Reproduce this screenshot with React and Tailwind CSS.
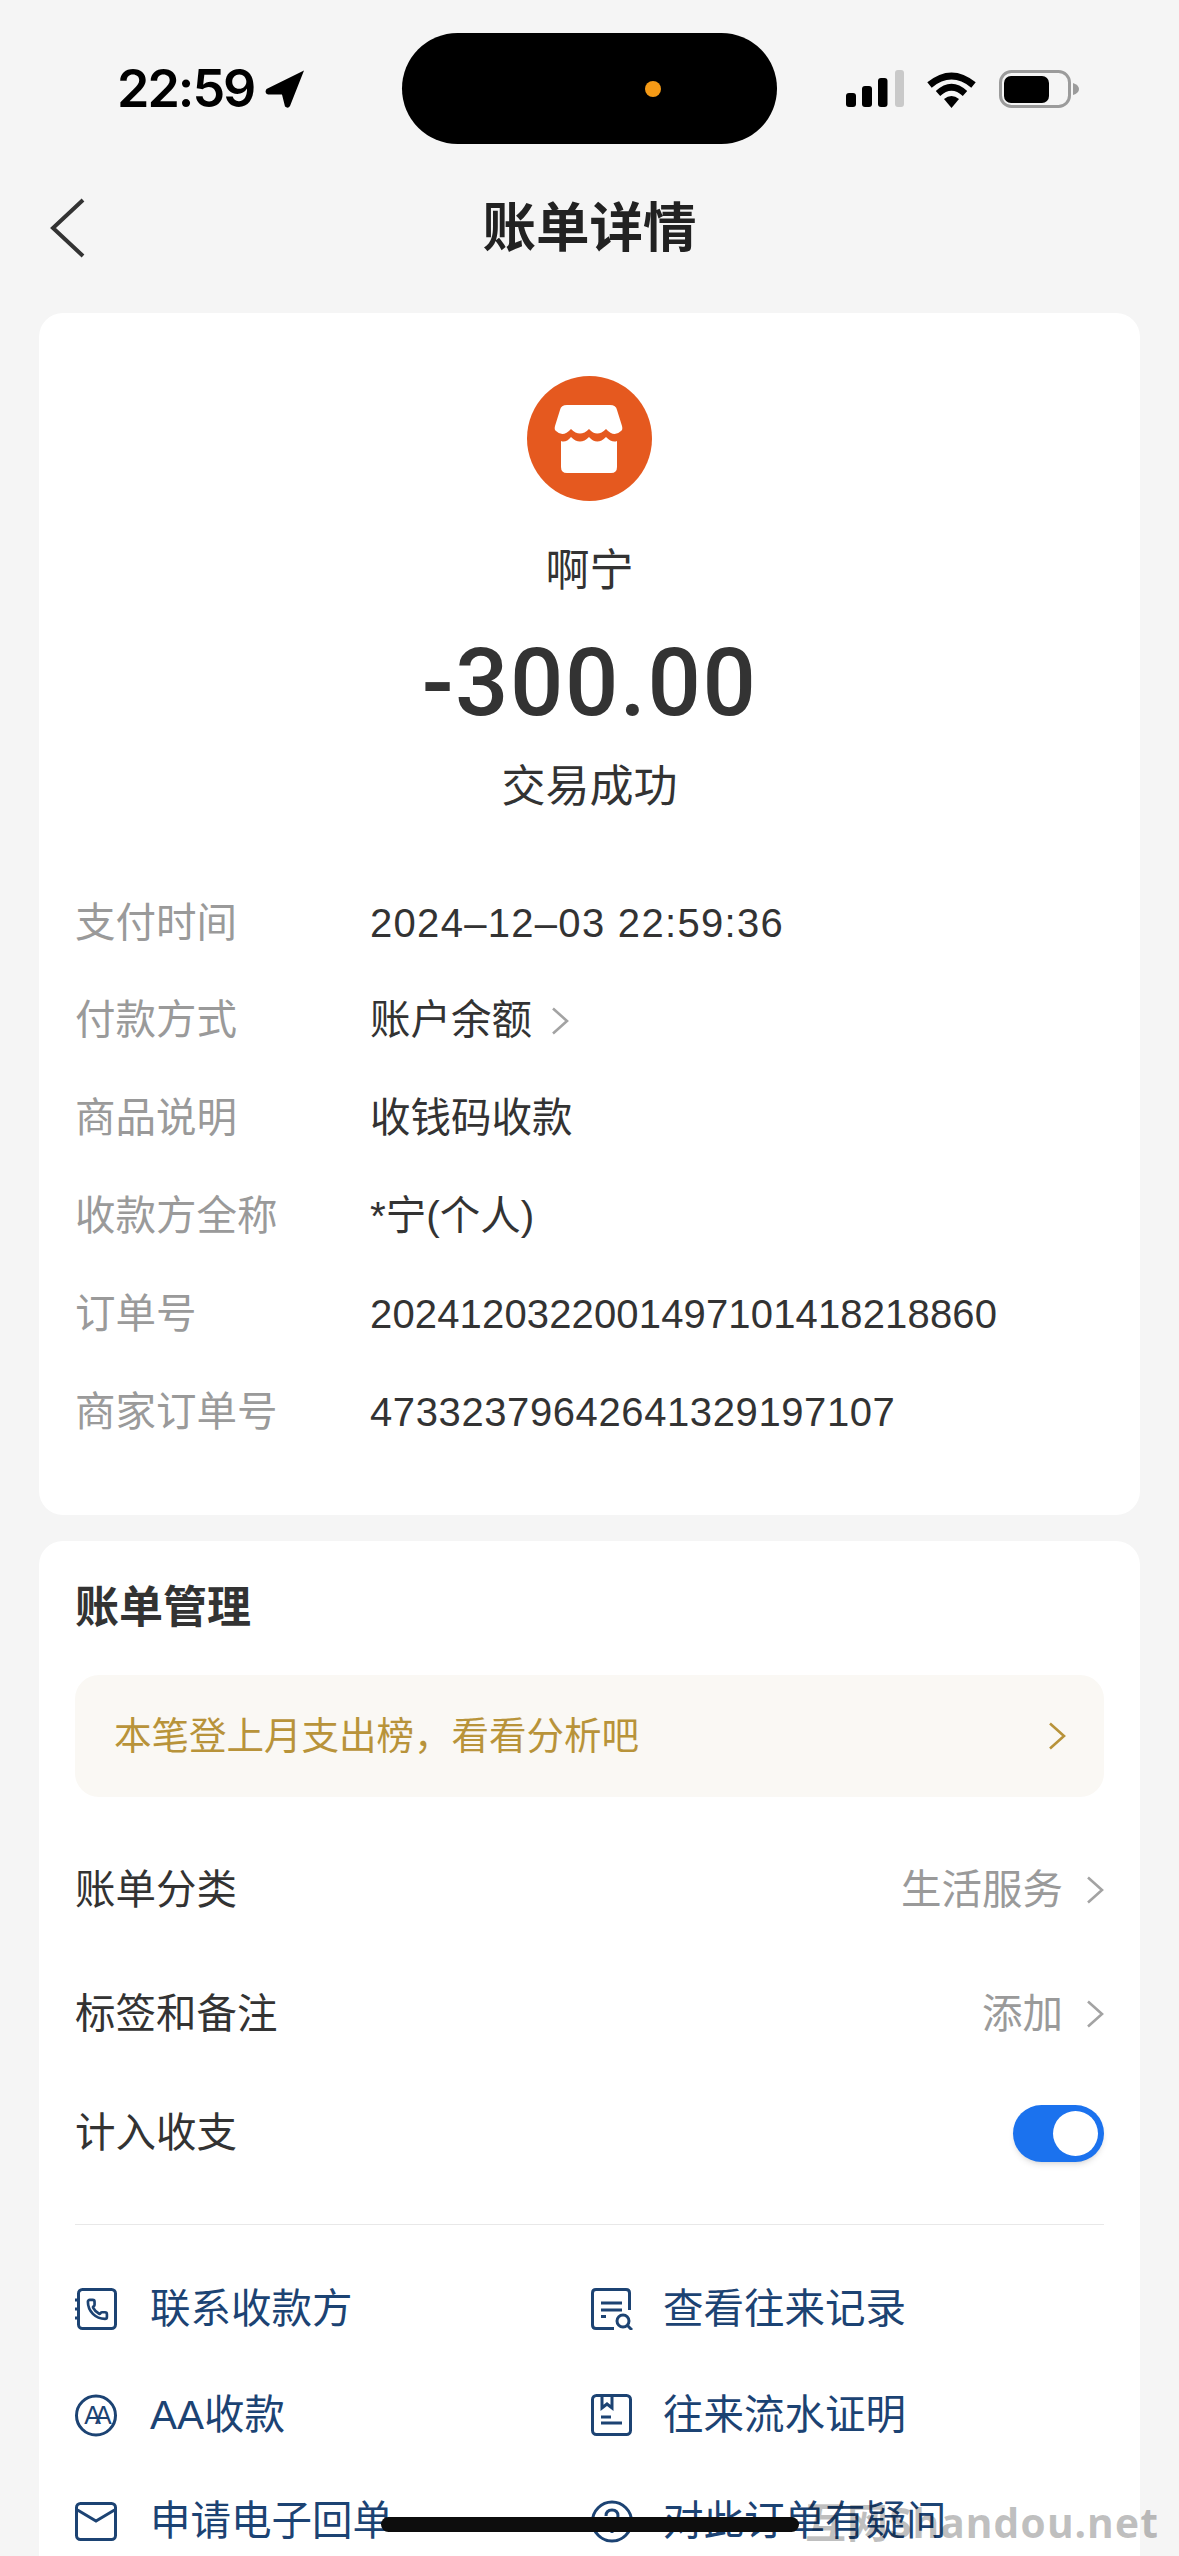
import React from 'react';

const NAVY = '#1c4373';

const Chevron = ({ className = '', color = '#a3a3a3' }) => (
  <svg width="18" height="28" viewBox="0 0 18 28" fill="none" className={className}>
    <path d="M2 1.5 L16 14 L2 26.5" stroke={color} strokeWidth="2.6" />
  </svg>
);

const StoreIcon = () => (
  <svg width="125" height="125" viewBox="0 0 125 125">
    <circle cx="62.5" cy="62.5" r="62.5" fill="#e5591f" />
    <path fill="#fff" d="M40 29 H83 Q89 29 90 34 L95 50 Q96 54 94 55 Q87 62 79 53 Q70 62 62 53 Q53 62 44 53 Q36 62 29 55 Q27 54 28 50 L33 34 Q34 29 40 29Z" />
    <path fill="#fff" d="M34 65 Q39 67 44 61 Q53 70 62 61 Q70 70 79 61 Q85 67 90 65 V91 Q90 97 84 97 H40 Q34 97 34 91Z" />
  </svg>
);

// status bar glyphs
const LocationArrow = () => (
  <svg width="40" height="38" viewBox="0 0 40 38" className="ml-[11px]">
    <path fill="#000" d="M39 0.5 L1.5 19 Q-1 23 3 24.5 L17 24.5 L20 36.5 Q23 39 25 36 Z" />
  </svg>
);

const SignalIcon = () => (
  <svg width="58" height="37" viewBox="0 0 58 37">
    <rect x="0" y="23" width="10" height="14" rx="3" fill="#000" />
    <rect x="16" y="16" width="10" height="21" rx="3" fill="#000" />
    <rect x="32" y="8" width="9.5" height="29" rx="3" fill="#000" />
    <rect x="49" y="0" width="9" height="37" rx="3" fill="#c9c9c9" />
  </svg>
);

const WifiIcon = () => (
  <svg width="51" height="38" viewBox="0 0 51 38" fill="none">
    <path d="M3.5 15 Q25.5 -3 47.5 15" stroke="#000" strokeWidth="7" />
    <path d="M12 23.5 Q25.5 11 39 23.5" stroke="#000" strokeWidth="6.5" />
    <path d="M18 29 Q25.5 23 33 29 L25.5 38 Z" fill="#000" />
  </svg>
);

const BatteryIcon = () => (
  <svg width="80" height="38" viewBox="0 0 80 38" fill="none">
    <rect x="1.5" y="1.5" width="69" height="35" rx="11" stroke="#9b9b9b" strokeWidth="3" />
    <rect x="5" y="6" width="45" height="27" rx="7" fill="#000" />
    <path d="M74 13 Q80 15 80 19 Q80 23 74 25 Z" fill="#9b9b9b" />
  </svg>
);

// bottom action icons, all 42 wide
const ContactIcon = () => (
  <svg width="42" height="42" viewBox="0 0 42 42" fill="none" stroke={NAVY} strokeWidth="3">
    <rect x="3.5" y="1.5" width="37" height="39" rx="4" />
    <path d="M0 12 H5 M0 21 H5 M0 30 H5" />
    <g transform="translate(11 10) scale(0.95)" strokeWidth="2.8">
      <path d="M13.832 16.568a1 1 0 0 0 1.213-.303l.355-.465A2 2 0 0 1 17 15h3a2 2 0 0 1 2 2v3a2 2 0 0 1-2 2A18 18 0 0 1 2 4a2 2 0 0 1 2-2h3a2 2 0 0 1 2 2v3a2 2 0 0 1-.8 1.6l-.468.351a1 1 0 0 0-.292 1.233 14 14 0 0 0 6.392 6.384" />
    </g>
  </svg>
);

const RecordIcon = () => (
  <svg width="42" height="42" viewBox="0 0 42 42" fill="none" stroke={NAVY} strokeWidth="3">
    <path d="M23 40.5 H5 Q1.5 40.5 1.5 37 V5 Q1.5 1.5 5 1.5 H35 Q38.5 1.5 38.5 5 V22" />
    <path d="M10 15 H31 M10 22 H31 M10 28.5 H15" />
    <circle cx="32" cy="33" r="6" />
    <path d="M36.5 37.5 L41 42" />
  </svg>
);

const AAIcon = () => (
  <svg width="42" height="43" viewBox="0 0 42 43" fill="none">
    <circle cx="21" cy="21.5" r="19.5" stroke={NAVY} strokeWidth="3" />
    <text x="20" y="30" textAnchor="middle" fontSize="25" fontFamily="'Liberation Sans'" letterSpacing="-6" fill={NAVY}>AA</text>
  </svg>
);

const LedgerIcon = () => (
  <svg width="42" height="42" viewBox="0 0 42 42" fill="none" stroke={NAVY} strokeWidth="3">
    <rect x="1.5" y="1.5" width="38" height="39" rx="4" />
    <path d="M11 2 V14 L16 10 L21 14 V2" />
    <path d="M10 23 H20 M10 29 H31" />
  </svg>
);

const MailIcon = () => (
  <svg width="42" height="39" viewBox="0 0 42 39" fill="none" stroke={NAVY} strokeWidth="3">
    <rect x="1.5" y="1.5" width="39" height="36" rx="4" />
    <path d="M2.5 8 L21 19 L39.5 8" />
  </svg>
);

const QuestionIcon = () => (
  <svg width="42" height="43" viewBox="0 0 42 43" fill="none" stroke={NAVY} strokeWidth="3">
    <circle cx="21" cy="21.5" r="19.5" />
    <path d="M15 16 Q15 10 21 10 Q27 10 27 16 Q27 20 21 22 V26" />
    <path d="M21 30 V33" />
  </svg>
);

const infoRows = [
  { label: '支付时间', value: '2024–12–03 22:59:36', cls: 'text-[40px] tracking-[1.3px]' },
  { label: '付款方式', value: '账户余额', link: true },
  { label: '商品说明', value: '收钱码收款' },
  { label: '收款方全称', value: '*宁(个人)' },
  { label: '订单号', value: '2024120322001497101418218860', cls: 'text-[40px] tracking-[0.15px]' },
  { label: '商家订单号', value: '47332379642641329197107', cls: 'text-[40px] tracking-[0.6px]' },
];

const actions = [
  [<ContactIcon key="i" />, '联系收款方', <RecordIcon key="j" />, '查看往来记录'],
  [<AAIcon key="i" />, 'AA收款', <LedgerIcon key="j" />, '往来流水证明'],
  [<MailIcon key="i" />, '申请电子回单', <QuestionIcon key="j" />, '对此订单有疑问'],
];

export default function App() {
  return (
    <div className="relative w-[1179px] h-[2556px] overflow-hidden bg-[#f5f5f5] text-[#333] font-['Liberation_Sans','Noto_Sans_CJK_SC',sans-serif]">
      {/* Status bar */}
      <div className="flex items-center pt-[33px] h-[144px]">
        <div className="w-[402px] pl-[117px] flex items-center text-black">
          <span className="text-[52px] leading-none font-semibold font-['Inter',sans-serif] tracking-[-2px]">22:59</span>
          <LocationArrow />
        </div>
        <div className="relative w-[375px] h-[111px] rounded-full bg-black">
          <div className="absolute left-[243px] top-[48px] w-[16px] h-[16px] rounded-full bg-[#f59a16]" />
        </div>
        <div className="flex items-center pl-[69px] gap-[22px]">
          <SignalIcon />
          <WifiIcon />
          <BatteryIcon />
        </div>
      </div>

      {/* Nav */}
      <div className="relative flex items-center justify-center h-[169px]">
        <svg width="36" height="60" viewBox="0 0 36 60" fill="none" className="absolute left-[49px] top-[54px]">
          <path d="M34 2 L4 30 L34 58" stroke="#333" strokeWidth="4" />
        </svg>
        <h1 className="text-[53.5px] leading-none font-bold text-[#222]">账单详情</h1>
      </div>

      {/* Transaction card */}
      <div className="mx-[39px] h-[1202px] rounded-[24px] bg-white px-[36px] pt-[63px]">
        <div className="flex flex-col items-center">
          <StoreIcon />
          <div className="mt-[41px] h-[58px] leading-[58px] text-[44px]">啊宁</div>
          <div className="mt-[23px] h-[120px] leading-[120px] text-[94px] font-medium font-['Roboto',sans-serif] tracking-[1.5px]">-300.00</div>
          <div className="mt-[14px] h-[60px] leading-[60px] text-[44px]">交易成功</div>
        </div>
        <div className="mt-[57px]">
          {infoRows.map(({ label, value, link, cls }) => (
            <div key={label} className="grid grid-cols-[295px_1fr] items-center h-[97.8px] text-[40.5px]">
              <span className="text-[#9a9a9a]">{label}</span>
              <span className={`flex items-center gap-[19px] ${cls || ''}`}>
                {value}
                {link && <Chevron />}
              </span>
            </div>
          ))}
        </div>
      </div>

      {/* Bill management card */}
      <div className="mx-[39px] mt-[26px] h-[1100px] rounded-[24px] bg-white px-[36px] pt-[37px]">
        <h2 className="h-[60px] leading-[60px] text-[44px] font-bold">账单管理</h2>
        <div className="mt-[37px] h-[122px] rounded-[24px] bg-[#faf8f4] pl-[39px] pr-[38px] flex items-center justify-between text-[37.5px] text-[#b8933a]">
          <span>本笔登上月支出榜，看看分析吧</span>
          <Chevron color="#b8933a" />
        </div>

        <div className="mt-[31px] h-[124px] flex items-center justify-between text-[40.5px]">
          <span>账单分类</span>
          <span className="flex items-center gap-[23px] text-[#9a9a9a]">生活服务<Chevron /></span>
        </div>
        <div className="h-[124px] flex items-center justify-between text-[40.5px]">
          <span>标签和备注</span>
          <span className="flex items-center gap-[23px] text-[#9a9a9a]">添加<Chevron /></span>
        </div>
        <div className="h-[114px] flex items-center justify-between text-[40.5px]">
          <span>计入收支</span>
          <div className="relative w-[91px] h-[57px] rounded-full bg-[#1b72ee] shadow-md">
            <div className="absolute left-[40px] top-[6px] w-[45px] h-[45px] rounded-full bg-white" />
          </div>
        </div>

        <div className="mt-[34px] h-px bg-[#e8e8e8]" />

        <div className="pt-[31px] text-[40.5px] text-[#1c4373]">
          {actions.map(([iconA, textA, iconB, textB]) => (
            <div key={textA} className="grid grid-cols-[516px_1fr] h-[106px] items-center">
              <div className="flex items-center gap-[33px]">{iconA}<span>{textA}</span></div>
              <div className="flex items-center gap-[30px]">{iconB}<span>{textB}</span></div>
            </div>
          ))}
        </div>
      </div>

      {/* Watermark and home bar sit over the page */}
      <div className="absolute right-[20px] top-[2496px] text-[41px] leading-[52px] font-bold font-['Noto_Sans','Noto_Sans_CJK_SC',sans-serif] tracking-[1px] text-black/25 whitespace-nowrap">互网Shandou.net</div>
      <div className="absolute left-[381px] top-[2517px] w-[418px] h-[15px] rounded-full bg-[#0d0d0d]" />
    </div>
  );
}
